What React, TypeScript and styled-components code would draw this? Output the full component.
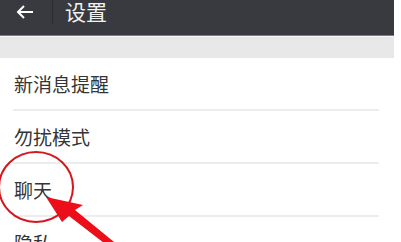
import React from 'react'
import styled, { createGlobalStyle } from 'styled-components'

const GlobalStyle = createGlobalStyle`
    html, body {
        margin: 0;
        padding: 0;
        background: #ffffff;
    }
    body {
        font-family: "Noto Sans CJK SC", "Noto Sans", sans-serif;
    }
`

const Screen = styled.div`
    position: relative;
    width: 401px;
    height: 242px;
    overflow: hidden;
    background: #ffffff;
`

const Phone = styled.div`
    width: 394px;
    background: #ffffff;
`

const Header = styled.header`
    display: flex;
    align-items: center;
    height: 24px;
    padding: 0 0 11px 16px;
    background: #393a3f;
    border-bottom: 1px solid #7c7d80;
`

const BackIcon = styled.svg`
    width: 18px;
    height: 14px;
    flex: none;
`

const Separator = styled.span`
    width: 1px;
    height: 24px;
    margin: 0 12px 0 18px;
    background: #2b2c30;
`

const Title = styled.h1`
    margin: 0;
    font-size: 21px;
    font-weight: 400;
    line-height: 24px;
    color: #f2f2f2;
    margin-top: -2px;
`

const Band = styled.div`
    height: 21px;
    background: #e8e8e8;
    border-top: 1px solid #f6f6f6;
`

const List = styled.ul`
    margin: 0;
    padding: 0 15px 0 13px;
    list-style: none;
`

const Row = styled.li`
    display: flex;
    align-items: center;
    height: 51px;
    padding-left: 1px;
    border-bottom: 2px solid #ededed;
    font-size: 19px;
    color: #353535;
`

const Annotation = styled.svg`
    position: absolute;
    left: 0;
    top: 0;
    width: 401px;
    height: 242px;
    pointer-events: none;
`

const items = ['新消息提醒', '勿扰模式', '聊天', '隐私']

export default function App() {
    return (
        <Screen>
            <GlobalStyle />
            <Phone>
                <Header>
                    <BackIcon viewBox="0 0 18 14">
                        <path d="M17 7H2M8 1L2 7l6 6" fill="none" stroke="#ffffff" strokeWidth="2" />
                    </BackIcon>
                    <Separator />
                    <Title>设置</Title>
                </Header>
                <Band />
                <List>
                    {items.map(item => (
                        <Row key={item}>{item}</Row>
                    ))}
                </List>
            </Phone>
            <Annotation viewBox="0 0 401 242">
                <ellipse cx="36" cy="187" rx="37" ry="35" fill="none" stroke="#d4161d" strokeWidth="2" />
                <polygon
                    points="46,197 83,205 75,210 136,260 126,260 69,216 62,222"
                    fill="#ec0f1a"
                />
            </Annotation>
        </Screen>
    )
}
